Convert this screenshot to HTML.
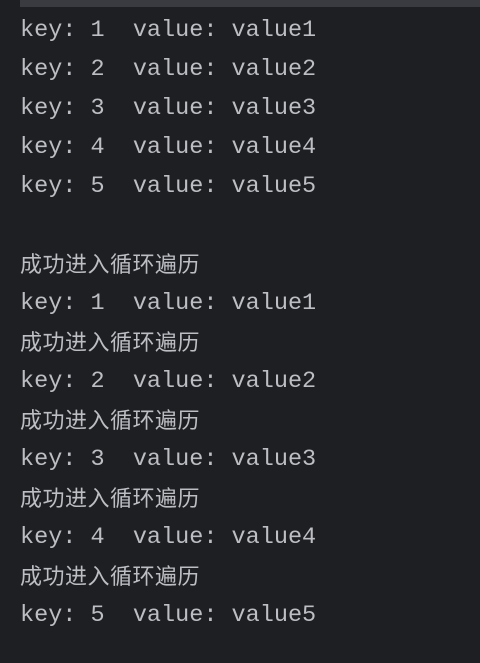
<!DOCTYPE html>
<html><head><meta charset="utf-8"><style>
html,body{margin:0;padding:0;background:#1e1f22;width:480px;height:663px;overflow:hidden}
.bar{position:absolute;left:20px;top:0;width:460px;height:7px;background:#393b40}
.c{position:absolute;left:20px;top:11px;color:#bcbec4;font-family:"Liberation Mono",monospace;font-size:23.5px}
.c div{height:39px;line-height:39px;white-space:pre}
.z{font-family:"Liberation Sans","Noto Sans CJK SC",sans-serif;font-size:22px;letter-spacing:0.5px}
</style></head><body>
<div class="bar"></div>
<div class="c"><div>key: 1  value: value1</div><div>key: 2  value: value2</div><div>key: 3  value: value3</div><div>key: 4  value: value4</div><div>key: 5  value: value5</div><div> </div><div class="z">成功进入循环遍历</div><div>key: 1  value: value1</div><div class="z">成功进入循环遍历</div><div>key: 2  value: value2</div><div class="z">成功进入循环遍历</div><div>key: 3  value: value3</div><div class="z">成功进入循环遍历</div><div>key: 4  value: value4</div><div class="z">成功进入循环遍历</div><div>key: 5  value: value5</div></div>
</body></html>
